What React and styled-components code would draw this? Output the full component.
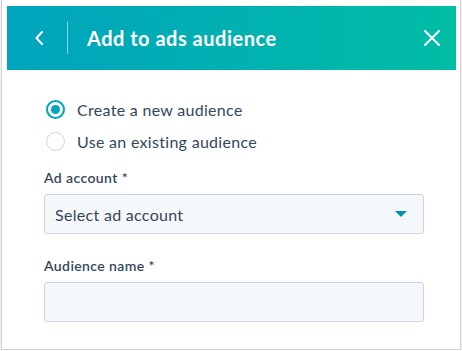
import React, { useState } from "react";
import styled, { createGlobalStyle } from "styled-components";

const GlobalStyle = createGlobalStyle`
  html, body {
    margin: 0;
    padding: 0;
    background: #ffffff;
    font-family: Lato, "Open Sans", sans-serif;
    color: #33475b;
  }
`;

const Frame = styled.div`
  box-sizing: border-box;
  width: 460px;
  height: 350px;
  margin-left: 1px;
  border: 1px solid #d3d3d3;
  border-top: none;
  box-shadow: 0 1px 1px rgba(0, 0, 0, 0.35);
  padding: 6px 4px 0 5px;
  background: #ffffff;
`;

const Header = styled.header`
  height: 64px;
  display: flex;
  align-items: center;
  padding: 0 12px 0 22px;
  background: linear-gradient(to right, #00a4bd, #00bda5);
  color: #ffffff;
`;

const IconButton = styled.button`
  display: flex;
  align-items: center;
  justify-content: center;
  background: none;
  border: none;
  padding: 0;
  color: #ffffff;
  cursor: pointer;
  width: ${({ size }) => size}px;
  height: ${({ size }) => size}px;
`;

const Divider = styled.div`
  width: 1px;
  height: 32px;
  background: rgba(255, 255, 255, 0.55);
  margin: 0 19px 0 18px;
`;

const Title = styled.h1`
  flex: 1;
  margin: 0;
  font-size: 20px;
  font-weight: 700;
  letter-spacing: 0.5px;
`;

const Body = styled.div`
  padding: 30px 32px 0 37px;
  display: flex;
  flex-direction: column;
`;

const RadioGroup = styled.div`
  display: flex;
  flex-direction: column;
  gap: 13px;
  margin-bottom: 18px;
`;

const RadioRow = styled.label`
  display: flex;
  align-items: center;
  gap: 12px;
  padding-left: 2px;
  font-size: 16px;
  line-height: 19px;
  letter-spacing: 0.3px;
  cursor: pointer;
`;

const RadioDot = styled.span`
  box-sizing: border-box;
  width: 19px;
  height: 19px;
  border-radius: 50%;
  border: ${({ checked }) => (checked ? "2px solid #00a4bd" : "1px solid #cbd6e2")};
  background: #ffffff;
  display: flex;
  align-items: center;
  justify-content: center;

  &::after {
    content: "";
    width: 9px;
    height: 9px;
    border-radius: 50%;
    background: ${({ checked }) => (checked ? "#00a4bd" : "transparent")};
  }
`;

const Label = styled.div`
  font-size: 14px;
  font-weight: 600;
  line-height: 18px;
  letter-spacing: 0.4px;
  margin-bottom: 7px;
`;

const Field = styled.div`
  box-sizing: border-box;
  height: 40px;
  border: 1px solid #cbd6e2;
  border-radius: 3px;
  background: #f5f8fa;
  display: flex;
  align-items: center;
  justify-content: space-between;
  padding: 0 16px 0 10px;
  font-size: 16px;
  letter-spacing: 0.3px;
  margin-bottom: ${({ gap }) => gap || 0}px;
`;

const Caret = styled.span`
  width: 0;
  height: 0;
  border-left: 6px solid transparent;
  border-right: 6px solid transparent;
  border-top: 6px solid #0091ae;
`;

export default function App() {
  const [mode, setMode] = useState("new");

  return (
    <>
      <GlobalStyle />
      <Frame>
        <Header>
          <IconButton size={20}>
            <svg width="10" height="16" viewBox="0 0 10 16" fill="none">
              <path d="M8 2 L2.5 8 L8 14" stroke="#fff" strokeWidth="2" strokeLinecap="round" strokeLinejoin="round" />
            </svg>
          </IconButton>
          <Divider />
          <Title>Add to ads audience</Title>
          <IconButton size={24}>
            <svg width="18" height="18" viewBox="0 0 18 18" fill="none">
              <path d="M2 2 L16 16 M16 2 L2 16" stroke="#fff" strokeWidth="2" strokeLinecap="round" />
            </svg>
          </IconButton>
        </Header>
        <Body>
          <RadioGroup>
            <RadioRow onClick={() => setMode("new")}>
              <RadioDot checked={mode === "new"} />
              Create a new audience
            </RadioRow>
            <RadioRow onClick={() => setMode("existing")}>
              <RadioDot checked={mode === "existing"} />
              Use an existing audience
            </RadioRow>
          </RadioGroup>
          <Label>Ad account *</Label>
          <Field gap={23}>
            Select ad account
            <Caret />
          </Field>
          <Label>Audience name *</Label>
          <Field />
        </Body>
      </Frame>
    </>
  );
}
